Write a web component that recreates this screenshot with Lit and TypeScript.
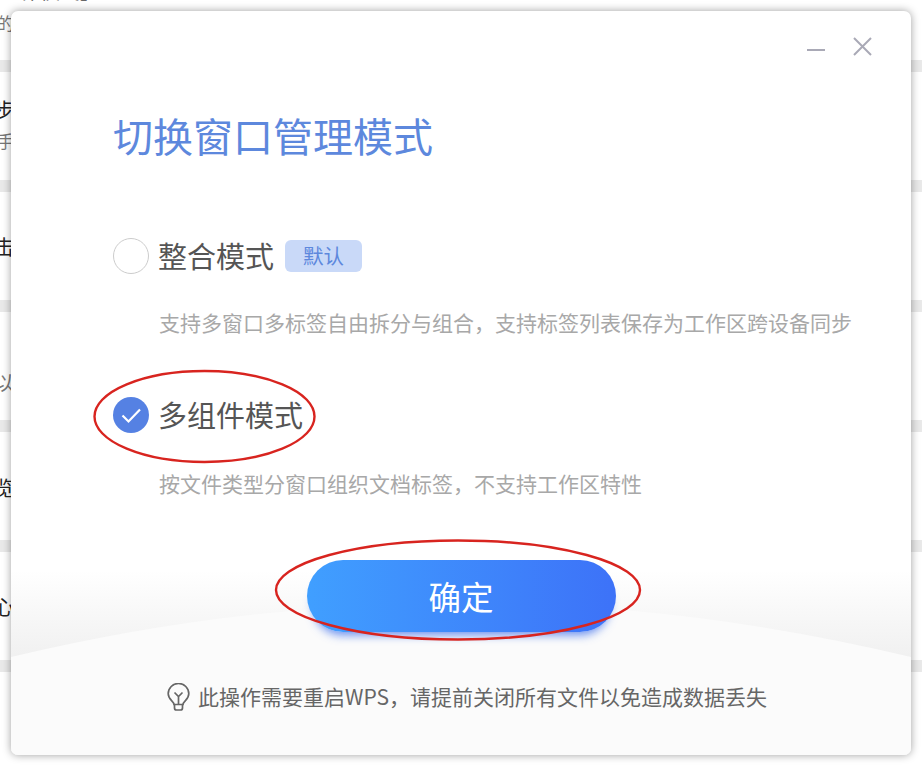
import { LitElement, html, css, svg } from "lit";
import { customElement } from "lit/decorators.js";

@customElement("app-root")
export class AppRoot extends LitElement {
  static styles = css`
    :host {
      display: block;
      position: relative;
      width: 922px;
      height: 766px;
      overflow: hidden;
      background: #fff;
      font-family: "Noto Sans CJK SC", "Noto Sans", sans-serif;
    }
    * { box-sizing: border-box; }
    .page { display: flex; flex-direction: column; height: 766px; }
    .row {
      background: #fff;
      height: 108px;
      flex: none;
      overflow: hidden;
      font-size: 20px;
      line-height: 24px;
      color: #222;
      white-space: nowrap;
    }
    .band { height: 12px; flex: none; background: #e9e9e9; }
    .r1 { height: 60px; }
    .r2 { padding-top: 26px; }
    .r3 { padding-top: 43px; }
    .r4 { padding-top: 59px; color: #777; }
    .r5 { padding-top: 44px; }
    .r6 { padding-top: 43px; }
    .r7 { flex: 1; height: auto; }
    .clip { width: 14px; display: flex; justify-content: flex-end; }
    .top { width: 74px; justify-content: flex-start; margin-top: -21px; font-size: 20px; color: #444; }
    .sub { font-size: 17px; color: #777; margin-top: 7px; }
    .sub1 { margin-top: 8px; font-size: 17px; color: #777; }

    .dialog {
      position: absolute;
      left: 11px;
      top: 11px;
      width: 900px;
      height: 744px;
      background: #fff;
      border-radius: 7px;
      box-shadow: 0 0 9px rgba(0, 0, 0, 0.38);
      display: flex;
      flex-direction: column;
      overflow: hidden;
    }
    .controls {
      display: flex;
      justify-content: flex-end;
      align-items: flex-start;
      gap: 28px;
      padding: 26px 39px 0 0;
    }
    .controls svg { display: block; fill: none; stroke: #a9a9b6; stroke-width: 2; }
    .body { padding-left: 102px; }
    h1 {
      margin: 51px 0 0;
      font-size: 40px;
      line-height: 56px;
      font-weight: 400;
      color: #5d88dd;
    }
    .option {
      display: flex;
      align-items: center;
      height: 36px;
      font-size: 29px;
      color: #555;
    }
    .o1 { margin-top: 75px; }
    .o2 { margin-top: 60px; }
    .label { display: block; line-height: 34px; height: 36px; }
    .radio {
      width: 36px;
      height: 36px;
      border-radius: 50%;
      border: 1.5px solid #ccc;
      flex: none;
      margin-right: 9px;
    }
    .check { flex: none; margin-right: 9px; display: block; }
    .badge {
      margin-left: 11px;
      width: 77px;
      height: 32px;
      border-radius: 6px;
      background: #c9d9f8;
      color: #5d88dd;
      font-size: 20.5px;
      line-height: 31px;
      text-align: center;
    }
    .desc {
      padding-left: 148px;
      font-size: 21px;
      line-height: 30px;
      color: #a8a8a8;
      white-space: nowrap;
    }
    .d1 { margin-top: 33px; }
    .d2 { margin-top: 35px; }

    .footer {
      position: relative;
      flex: 1;
      margin-top: 42px;
      background: linear-gradient(#fff, #fff 30px, #f0f0f0 120px);
      display: flex;
      flex-direction: column;
    }
    .arc { position: absolute; left: 0; top: 0; width: 900px; height: 215px; display: block; }
    button {
      position: relative;
      align-self: center;
      margin-top: 20px;
      width: 309px;
      height: 72px;
      border: 0;
      border-radius: 36px;
      background: linear-gradient(90deg, #409fff, #3d72f8);
      box-shadow: 0 9px 10px -6px rgba(55, 105, 235, 0.75);
      color: #fff;
      font-family: inherit;
      font-size: 32.5px;
      padding: 0 0 2px;
    }
    .note {
      position: relative;
      display: flex;
      align-items: center;
      gap: 8px;
      margin-top: 50px;
      padding-left: 156px;
      height: 30px;
      font-size: 21px;
      line-height: 28px;
      color: #666;
      white-space: nowrap;
    }
    .note span { display: block; height: 30px; }
    .note svg { display: block; flex: none; fill: none; stroke: #666; stroke-width: 1.7; }

    .marks {
      position: absolute;
      left: 0;
      top: 0;
      width: 922px;
      height: 766px;
      pointer-events: none;
    }
  `;

  render() {
    return html`
      <div class="page">
        <div class="row r1">
          <div class="clip top">工作模式】</div>
          <div class="clip sub1">的</div>
        </div>
        <div class="band"></div>
        <div class="row r2">
          <div class="clip">同步</div>
          <div class="clip sub">手</div>
        </div>
        <div class="band"></div>
        <div class="row r3"><div class="clip">击</div></div>
        <div class="band"></div>
        <div class="row r4"><div class="clip">以</div></div>
        <div class="band"></div>
        <div class="row r5"><div class="clip">览</div></div>
        <div class="band"></div>
        <div class="row r6"><div class="clip">心</div></div>
        <div class="band"></div>
        <div class="row r7"></div>
      </div>

      <div class="dialog">
        <div class="controls">
          <svg width="18" height="19" viewBox="0 0 18 19"><path d="M0 13h18" /></svg>
          <svg width="19" height="19" viewBox="0 0 19 19"><path d="M1 1l17 17M18 1L1 18" /></svg>
        </div>
        <div class="body">
          <h1>切换窗口管理模式</h1>
          <div class="option o1">
            <span class="radio"></span><span class="label">整合模式</span><span class="badge">默认</span>
          </div>
        </div>
        <div class="desc d1">支持多窗口多标签自由拆分与组合\uFF0C支持标签列表保存为工作区跨设备同步</div>
        <div class="body">
          <div class="option o2">
            <svg class="check" width="36" height="36" viewBox="0 0 36 36">
              <circle cx="18" cy="18" r="18" fill="#5581e3" />
              <path d="M9.5 18.5l6 6L27 12.5" fill="none" stroke="#fff" stroke-width="2.2" />
            </svg>
            <span class="label">多组件模式</span>
          </div>
        </div>
        <div class="desc d2">按文件类型分窗口组织文档标签\uFF0C不支持工作区特性</div>
        <div class="footer">
          <svg class="arc" viewBox="0 0 900 215" preserveAspectRatio="none">
            <path d="M0 117Q450 9 900 117V215H0Z" fill="#fbfbfb" />
          </svg>
          <button>确定</button>
          <div class="note">
            <svg width="23" height="28" viewBox="0 0 23 28">
              <path d="M7 21.5C7 18.5 1.2 16.5 1.2 10.8a10.3 10.3 0 0 1 20.6 0C21.8 16.5 16 18.5 16 21.5Z" />
              <path d="M7.5 21.5v3.5a2 2 0 0 0 2 2h4a2 2 0 0 0 2-2v-3.5M7.5 9.5l4 4 4-4M11.5 13.5v8" />
            </svg>
            <span>此操作需要重启WPS\uFF0C请提前关闭所有文件以免造成数据丢失</span>
          </div>
        </div>
      </div>

      <svg class="marks" viewBox="0 0 922 766">
        ${svg`<ellipse cx="204.5" cy="416.5" rx="110" ry="45.5" fill="none" stroke="#d8241f" stroke-width="2.4" />
        <ellipse cx="458" cy="590" rx="182" ry="49.5" fill="none" stroke="#d8241f" stroke-width="2.4" />`}
      </svg>
    `;
  }
}
